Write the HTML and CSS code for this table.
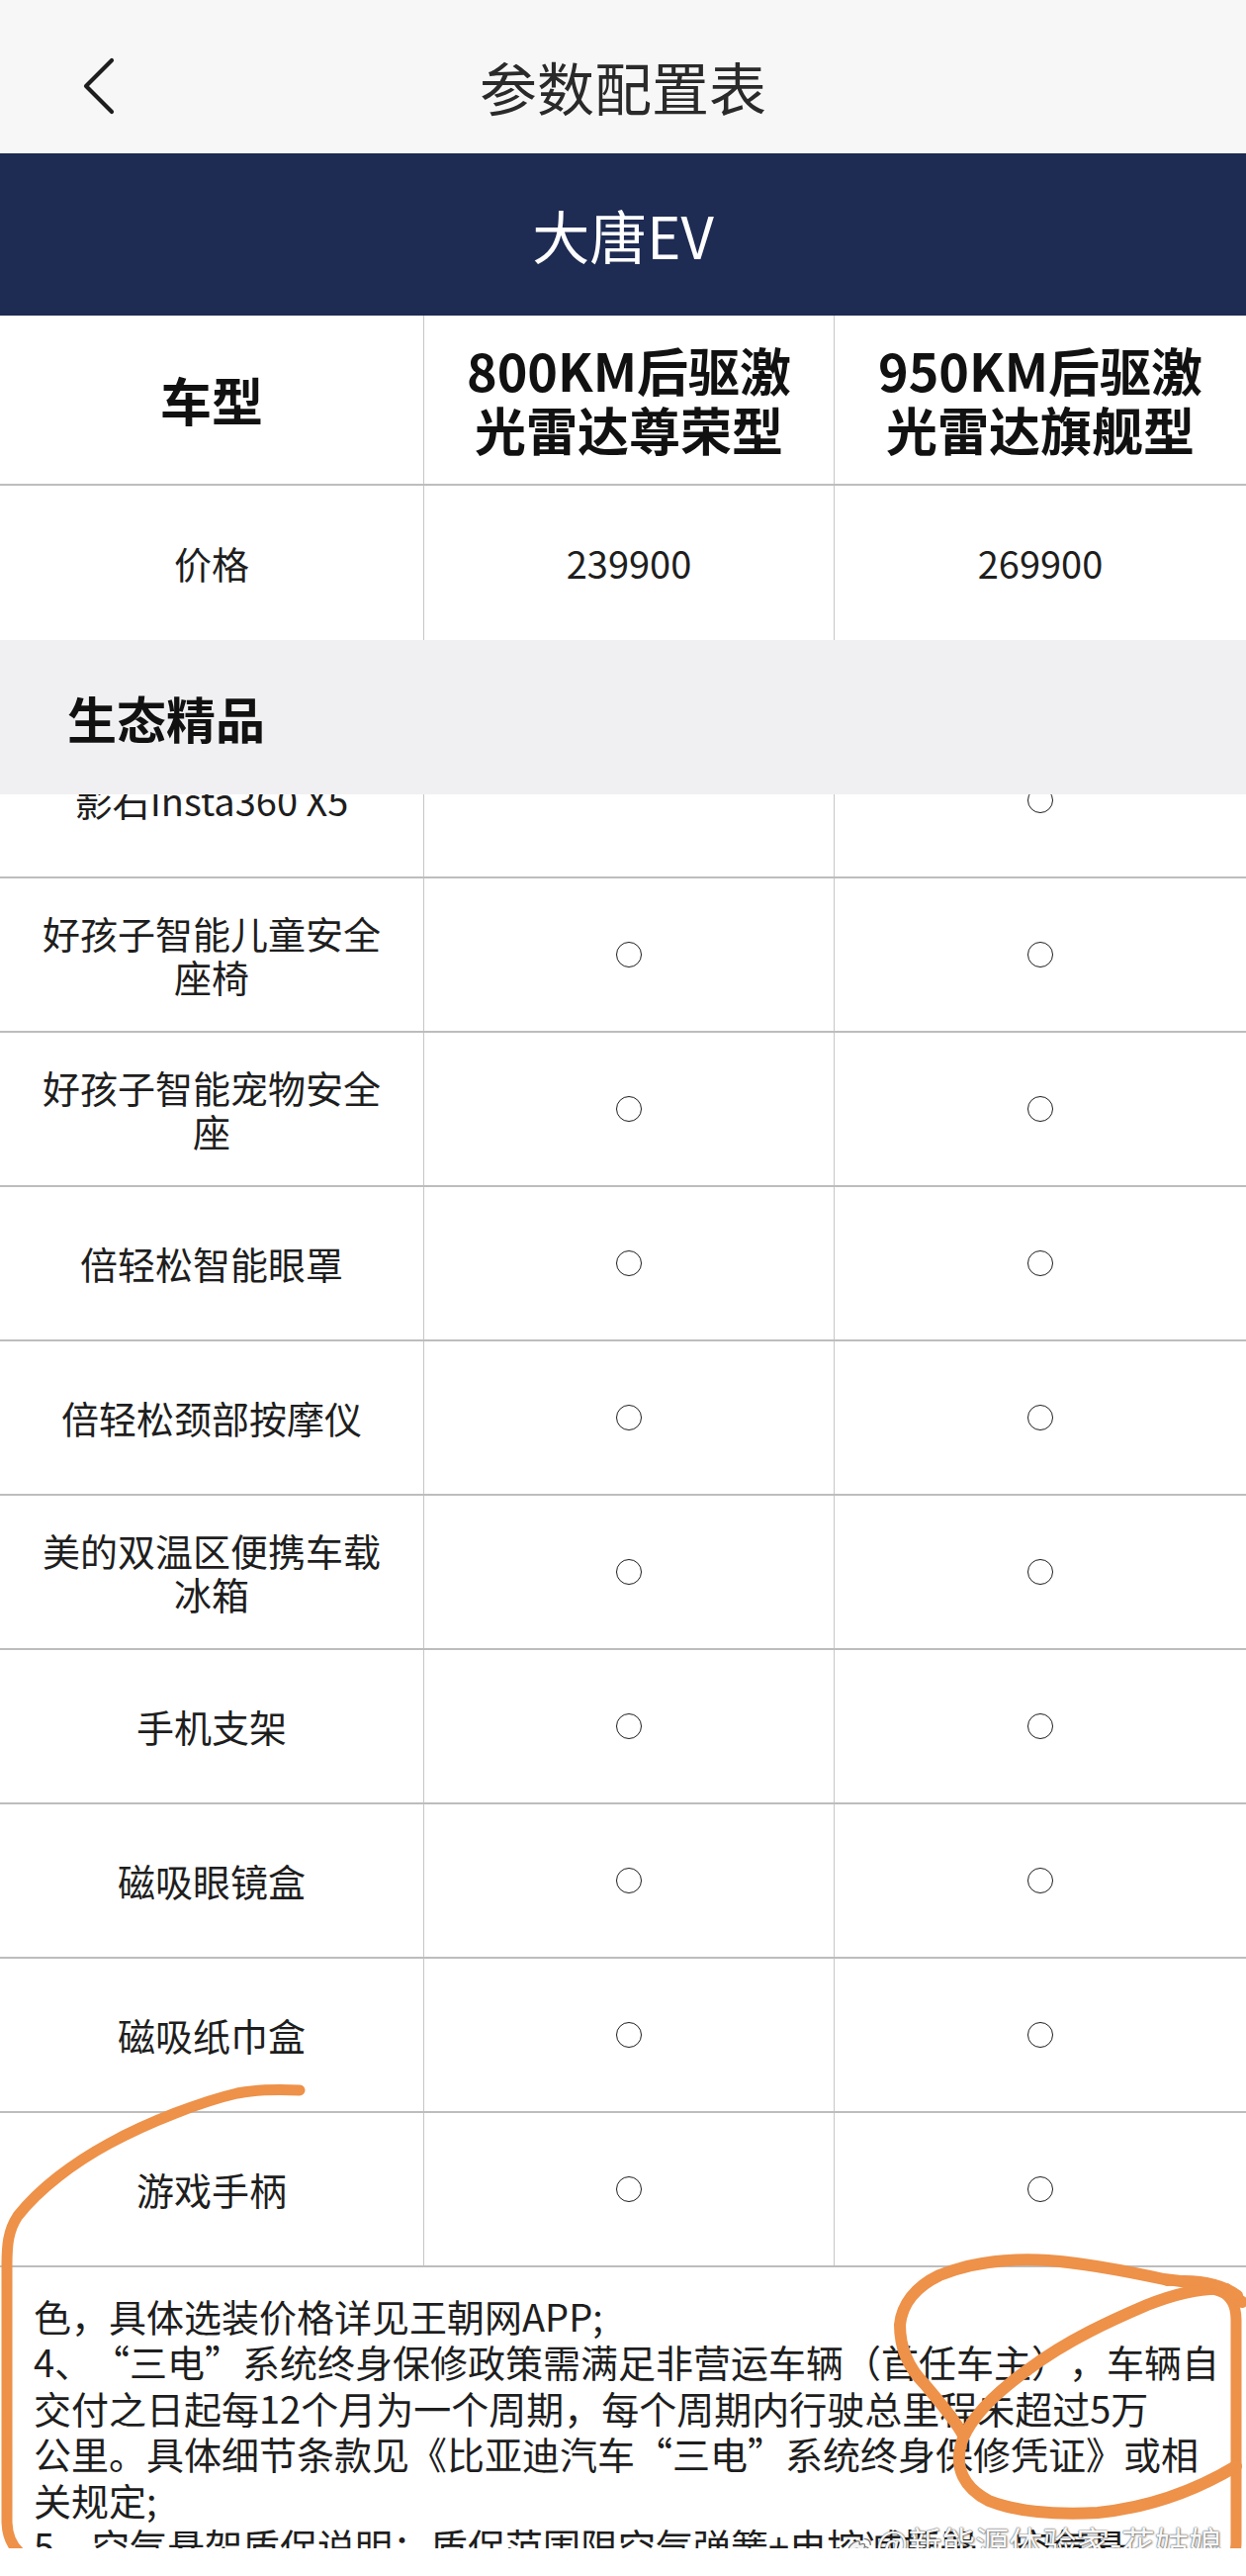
FILE: index.html
```html
<!DOCTYPE html>
<html lang="zh-CN">
<head>
    <meta charset="UTF-8">
    <meta name="viewport" content="width=device-width, initial-scale=1.0">
    <title>参数配置表</title>
    <link rel="stylesheet" href="styles.css">
</head>
<body>
    <header class="topbar">
        <a class="back" href="#">
            <svg width="32" height="58" viewBox="0 0 32 58">
                <path d="M29 3 L3 29 L29 55" fill="none" stroke="#1e1e1e" stroke-width="4.2" stroke-linecap="round" stroke-linejoin="round"/>
            </svg>
        </a>
        <h1>参数配置表</h1>
    </header>

    <div class="banner">大唐EV</div>

    <div class="spec-table">
        <div class="row head">
            <div class="cell">车型</div>
            <div class="cell">800KM后驱激光雷达尊荣型</div>
            <div class="cell">950KM后驱激光雷达旗舰型</div>
        </div>
        <div class="row price">
            <div class="cell">价格</div>
            <div class="cell">239900</div>
            <div class="cell">269900</div>
        </div>

        <div class="section-title">生态精品</div>

        <div class="item-list">
            <div class="row">
                <div class="cell">影石Insta360 X5</div>
                <div class="cell"></div>
                <div class="cell"><span class="dot"></span></div>
            </div>
            <div class="row">
                <div class="cell">好孩子智能儿童安全座椅</div>
                <div class="cell"><span class="dot"></span></div>
                <div class="cell"><span class="dot"></span></div>
            </div>
            <div class="row">
                <div class="cell">好孩子智能宠物安全座</div>
                <div class="cell"><span class="dot"></span></div>
                <div class="cell"><span class="dot"></span></div>
            </div>
            <div class="row">
                <div class="cell">倍轻松智能眼罩</div>
                <div class="cell"><span class="dot"></span></div>
                <div class="cell"><span class="dot"></span></div>
            </div>
            <div class="row">
                <div class="cell">倍轻松颈部按摩仪</div>
                <div class="cell"><span class="dot"></span></div>
                <div class="cell"><span class="dot"></span></div>
            </div>
            <div class="row">
                <div class="cell">美的双温区便携车载冰箱</div>
                <div class="cell"><span class="dot"></span></div>
                <div class="cell"><span class="dot"></span></div>
            </div>
            <div class="row">
                <div class="cell">手机支架</div>
                <div class="cell"><span class="dot"></span></div>
                <div class="cell"><span class="dot"></span></div>
            </div>
            <div class="row">
                <div class="cell">磁吸眼镜盒</div>
                <div class="cell"><span class="dot"></span></div>
                <div class="cell"><span class="dot"></span></div>
            </div>
            <div class="row">
                <div class="cell">磁吸纸巾盒</div>
                <div class="cell"><span class="dot"></span></div>
                <div class="cell"><span class="dot"></span></div>
            </div>
            <div class="row">
                <div class="cell">游戏手柄</div>
                <div class="cell"><span class="dot"></span></div>
                <div class="cell"><span class="dot"></span></div>
            </div>
        </div>

        <div class="notes">
            <p>色，具体选装价格详见王朝网APP;<br>
            4、“三电”系统终身保修政策需满足非营运车辆（首任车主），车辆自<br>
            交付之日起每12个月为一个周期，每个周期内行驶总里程未超过5万<br>
            公里。具体细节条款见《比亚迪汽车“三电”系统终身保修凭证》或相<br>
            关规定;<br>
            5、空气悬架质保说明：质保范围限空气弹簧+电控减振器，空气悬</p>
        </div>
    </div>

    <!-- hand-drawn marks over the screenshot -->
    <svg class="scribble" width="1260" height="2604" viewBox="0 0 1260 2604">
        <g fill="none" stroke="#ee9149" stroke-linecap="round" stroke-linejoin="round">
            <path stroke-width="11" d="M303 2113 C280 2112 260 2112 240 2116 C205 2124 150 2145 110 2167 C75 2186 40 2212 18 2240 C8 2255 7 2270 7 2290 L7 2550 C8 2575 22 2590 60 2596 L1200 2599 C1240 2599 1250 2590 1250 2570 L1250 2345 C1250 2330 1245 2322 1235 2316"/>
            <path stroke-width="12" d="M1256 2327 C1240 2315 1210 2307 1177 2304 C1140 2296 1100 2288 1060 2285 C1010 2282 975 2290 950 2300 C925 2312 912 2330 910 2350 C910 2375 920 2395 935 2410 C950 2428 965 2445 973 2460"/>
            <path stroke-width="12" d="M1240 2314 C1215 2312 1190 2318 1160 2330 C1125 2345 1080 2365 1040 2395 C1005 2420 980 2445 972 2470 C965 2495 975 2515 1000 2528 C1030 2540 1070 2542 1110 2540 C1160 2535 1205 2520 1250 2493"/>
            <path stroke-width="10" d="M1180 2306 C1210 2303 1235 2308 1252 2320"/>
        </g>
    </svg>

    <div class="watermark">
        <svg class="weibo" width="26" height="24" viewBox="0 0 30 26">
            <path d="M12 6 C6 8 2 13 2 17 C2 22 8 24 13 24 C20 24 26 20 26 16 C26 13 23 12 21 13 C22 10 21 8 18 9 C16 10 15 10 15 9 C16 6 14 5 12 6 Z" fill="#f4f4f4" stroke="#7a7a7a" stroke-width="1.5"/>
            <ellipse cx="12" cy="18" rx="5" ry="3.6" fill="none" stroke="#7a7a7a" stroke-width="1.5"/>
            <circle cx="11" cy="18.5" r="1.6" fill="#7a7a7a"/>
            <path d="M21 3 C25 3 28 6 28 10" fill="none" stroke="#7a7a7a" stroke-width="1.6" stroke-linecap="round"/>
        </svg>
        <span>@新能源体验家-花姑娘</span>
    </div>
</body>
</html>
```

FILE: styles.css
```css
body {
    margin: 0;
    width: 1260px;
    position: relative;
    font-family: "Noto Sans CJK SC", "Noto Sans", sans-serif;
    color: #1e1e1e;
    background: #fff;
}
.topbar {
    height: 155px;
    box-sizing: border-box;
    padding-top: 18px;
    background: #f7f7f7;
    display: grid;
    grid-template-columns: 1fr auto 1fr;
    align-items: center;
}
.back {
    display: flex;
    padding-left: 84px;
}
.topbar h1 {
    margin: 0;
    font-size: 58px;
    font-weight: 400;
    color: #2a2a2a;
}
.banner {
    height: 164px;
    background: #1e2b53;
    color: #fff;
    font-size: 58px;
    display: flex;
    align-items: center;
    justify-content: center;
}
.row {
    display: grid;
    grid-template-columns: 428px 415px 1fr;
    height: 156px;
    box-sizing: border-box;
    border-bottom: 2px solid #bdbdbd;
}
.cell {
    display: flex;
    align-items: center;
    justify-content: center;
    text-align: center;
    padding: 0 30px;
    font-size: 38px;
    line-height: 44px;
}
.cell + .cell {
    border-left: 1px solid #c6c6c6;
}
.row.head {
    height: 172px;
}
.head .cell {
    font-size: 52px;
    font-weight: 700;
    line-height: 60px;
    color: #111;
}
.row.price {
    border-bottom: none;
}
.section-title {
    height: 156px;
    background: #f0f0f2;
    display: flex;
    align-items: center;
    padding-left: 68px;
    font-size: 50px;
    font-weight: 700;
    color: #111;
}
.item-list {
    overflow: hidden;
}
.item-list .row:first-child {
    margin-top: -71px;
}
.dot {
    width: 24px;
    height: 24px;
    border: 1.6px solid #1e1e1e;
    border-radius: 50%;
}
.notes {
    height: 284px;
    box-sizing: border-box;
    overflow: hidden;
    padding: 26px 34px 0;
    font-size: 38px;
    line-height: 46.4px;
    white-space: nowrap;
    text-spacing-trim: space-all;
}
.notes p {
    margin: 0;
}
.scribble {
    position: absolute;
    top: 0;
    left: 0;
    pointer-events: none;
}
.watermark {
    position: absolute;
    left: 856px;
    top: 2545px;
    display: flex;
    align-items: center;
    gap: 4px;
    font-size: 34px;
    white-space: nowrap;
    color: #f7f7f7;
    text-shadow: 0 0 1px #555, 0 0 2px rgba(0,0,0,0.5), 1px 1px 2px rgba(0,0,0,0.35);
}
.weibo {
    margin-top: 10px;
}
```
